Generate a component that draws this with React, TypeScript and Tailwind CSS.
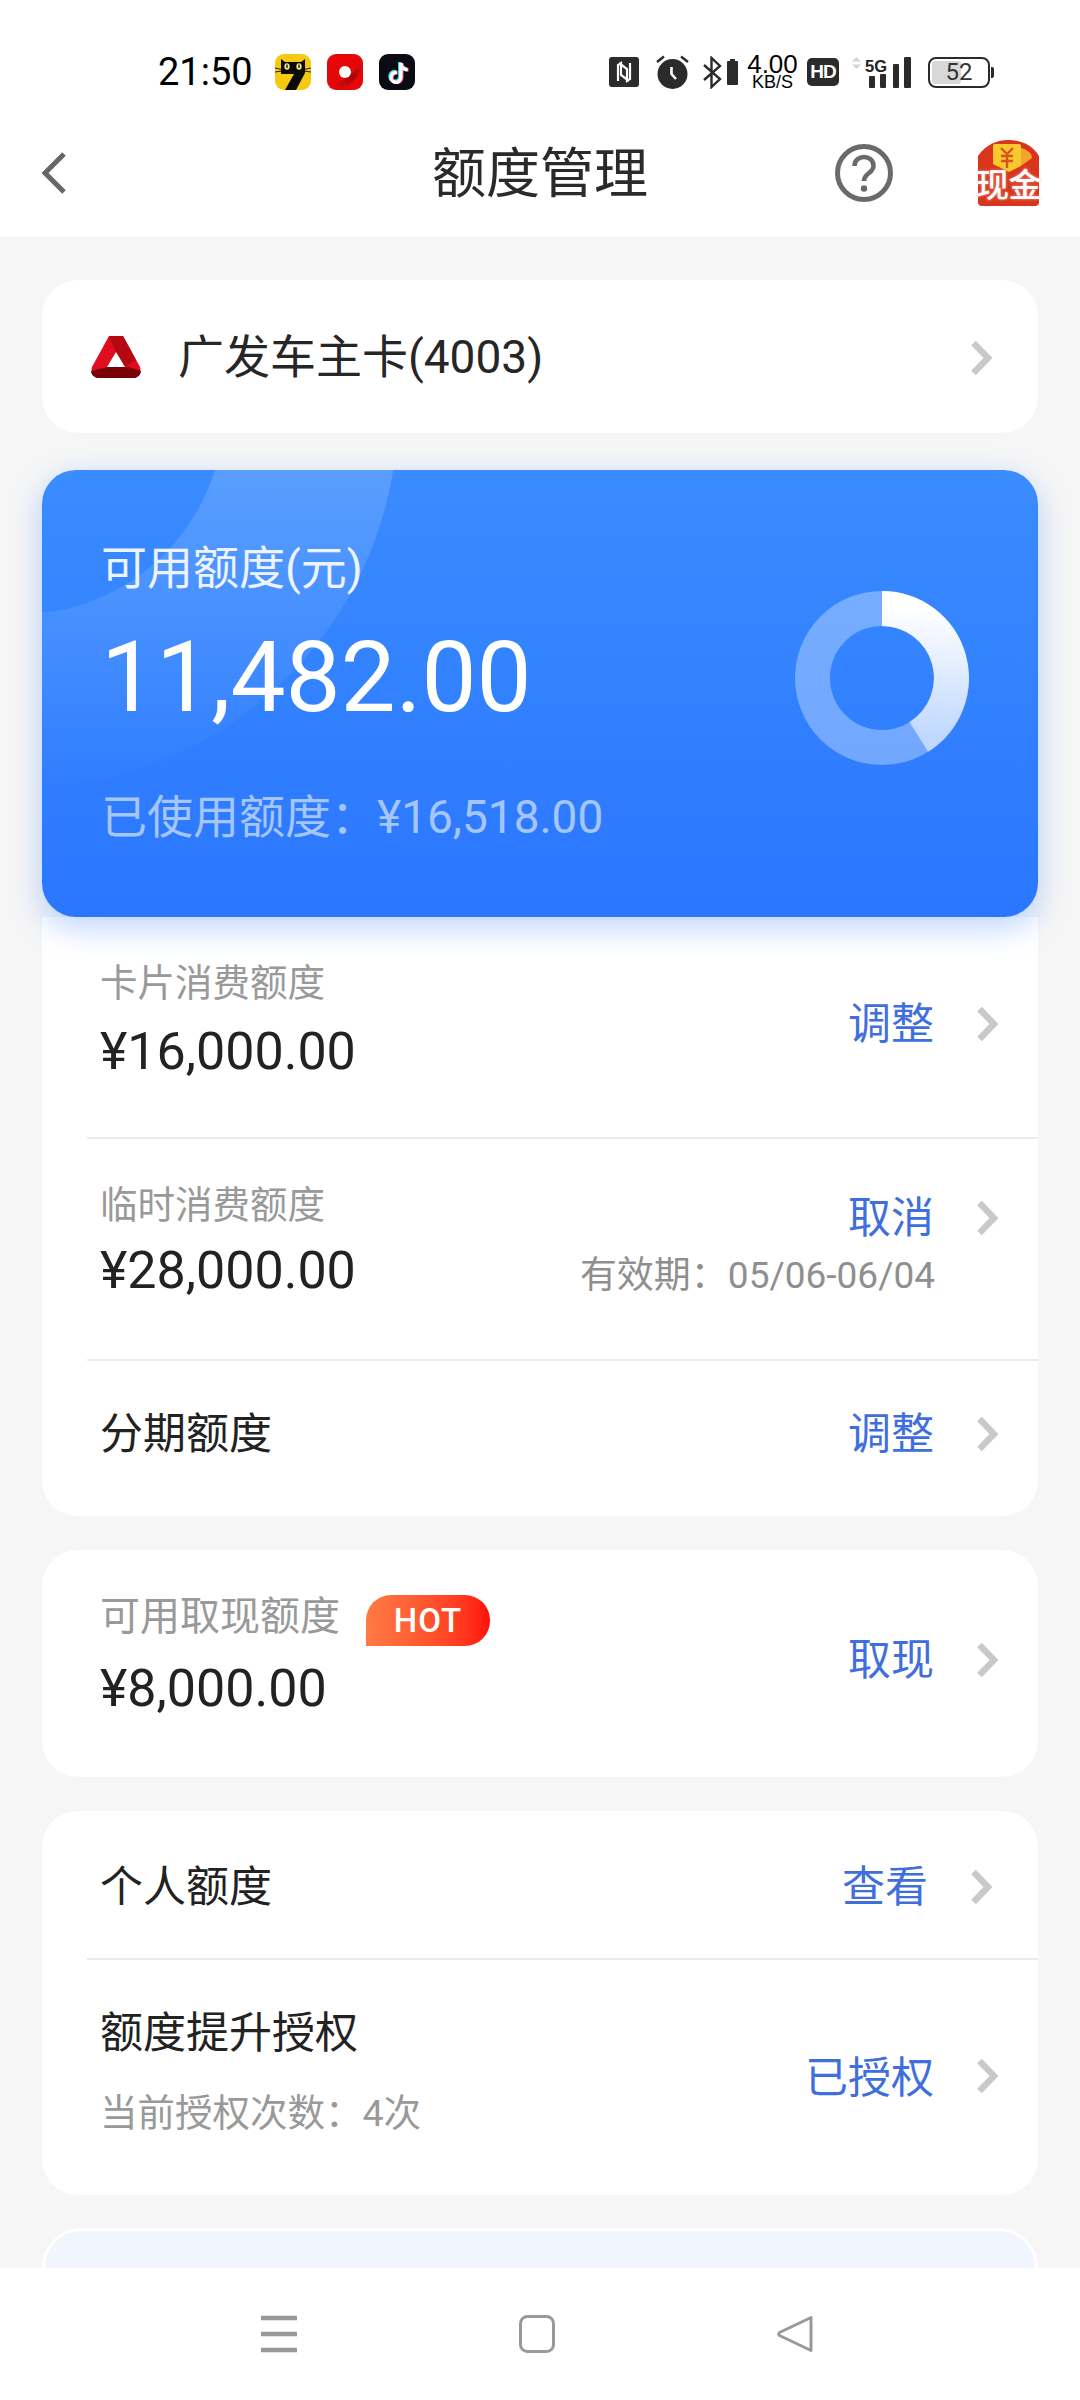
import { FaTiktok } from "react-icons/fa";

function Chevron({ className = "" }: { className?: string }) {
  return (
    <svg width="22" height="36" viewBox="0 0 22 36" className={className}>
      <path d="M3.5 3 L18 18 L3.5 33" fill="none" stroke="#c9c9c9" strokeWidth="6.5" />
    </svg>
  );
}

function CatIcon() {
  return (
    <svg width="36" height="36" viewBox="0 0 36 36">
      <rect width="36" height="36" rx="9" fill="#f5c90f" />
      <path d="M6 5 L10 8 H26 L30 5 V19 L21 36 H10 L19 20 H6 Z" fill="#0c0a05" />
      <ellipse cx="12" cy="12.5" rx="2.6" ry="3.2" fill="#f5e9a0" />
      <ellipse cx="24" cy="12.5" rx="2.6" ry="3.2" fill="#f5e9a0" />
      <path d="M12 10.5 V14 M24 10.5 V14" stroke="#0c0a05" strokeWidth="1.3" />
      <path d="M0 14 L7 15.5 M0 18 L7 17 M29 15.5 L36 14 M29 17 L36 18" stroke="#0c0a05" strokeWidth="0.9" />
    </svg>
  );
}

function RedIcon() {
  return (
    <svg width="36" height="36" viewBox="0 0 36 36">
      <defs>
        <linearGradient id="swirl" x1="0" y1="1" x2="1" y2="0">
          <stop offset="0" stopColor="#ee0a0a" />
          <stop offset="0.55" stopColor="#a80404" />
          <stop offset="1" stopColor="#e81010" />
        </linearGradient>
      </defs>
      <rect width="36" height="36" rx="9" fill="#e60808" />
      <path d="M4 30 C14 30 28 20 34 6 L36 12 C30 26 20 34 10 36 Z" fill="url(#swirl)" />
      <circle cx="18" cy="18" r="6" fill="#fff" />
    </svg>
  );
}

function TiktokIcon() {
  return (
    <div className="relative w-[36px] h-[36px] rounded-[9px] bg-[#0b0b16] overflow-hidden flex items-center justify-center">
      <FaTiktok className="absolute left-[8px] top-[8px] text-[#29e5e0]" size={21} />
      <FaTiktok className="absolute left-[10px] top-[9px] text-[#f0375a]" size={21} />
      <FaTiktok className="absolute left-[9px] top-[8.5px] text-white" size={21} />
    </div>
  );
}

function StatusRight() {
  return (
    <div className="flex items-center text-[#222]">
      <svg width="30" height="30" viewBox="0 0 30 30">
        <rect width="30" height="30" rx="3" fill="#2b2b2b" />
        <path d="M9 24 V8 L12 6 V18 L20 24 M21 6 V22 L18 24 V12 L10 6" fill="none" stroke="#fff" strokeWidth="2.2" />
      </svg>
      <svg width="33" height="34" viewBox="0 0 33 34" className="ml-[17px]">
        <circle cx="16.5" cy="19" r="15" fill="#2b2b2b" />
        <path d="M1 7 L8 1.5 M32 7 L25 1.5" stroke="#2b2b2b" strokeWidth="2.4" />
        <path d="M15.5 12 V19 L20 24" fill="none" stroke="#fff" strokeWidth="2.6" />
      </svg>
      <svg width="19" height="33" viewBox="0 0 19 33" className="ml-[14px]">
        <path d="M1 9 L17 23 L8.5 31 V2 L17 10 L1 24" fill="none" stroke="#2b2b2b" strokeWidth="2.4" />
      </svg>
      <div className="ml-[5px] w-[11px] h-[26px] flex flex-col items-center">
        <div className="w-[5px] h-[2px] bg-[#2b2b2b]" />
        <div className="w-[11px] h-[24px] bg-[#2b2b2b] rounded-[1px]" />
      </div>
      <div className="ml-[9px] w-[51px] flex flex-col items-center font-['Liberation_Sans',sans-serif] text-black">
        <span className="text-[26px] leading-[20px]">4.00</span>
        <span className="text-[18px] leading-[15px] mt-[1px]">KB/S</span>
      </div>
      <div className="ml-[9px] w-[32px] h-[28px] rounded-[5px] bg-[#2b2b2b] flex items-center justify-center text-white text-[19px] font-bold font-['Liberation_Sans',sans-serif] tracking-[-1px]">
        HD
      </div>
      <svg width="59" height="33" viewBox="0 0 59 33" className="ml-[13px]">
        <path d="M4.5 1 L9 5.5 H0 Z M4.5 13 L9 8.5 H0 Z" fill="#d4d4d4" />
        <text x="13" y="15.5" fontSize="17" fontWeight="700" fill="#222" fontFamily="Liberation Sans, sans-serif" textLength="22" lengthAdjust="spacingAndGlyphs">
          5G
        </text>
        <rect x="17" y="20" width="6" height="12" rx="1" fill="#2b2b2b" />
        <rect x="28" y="18" width="6" height="14" rx="1" fill="#2b2b2b" />
        <rect x="41" y="8" width="6" height="24" rx="1" fill="#2b2b2b" />
        <rect x="52" y="1" width="7" height="31" rx="1" fill="#2b2b2b" />
      </svg>
      <div className="ml-[17px] flex items-center">
        <div className="relative w-[62px] h-[31px] rounded-[8px] border-[2px] border-[#2b2b2b] overflow-hidden flex items-center justify-center">
          <div className="absolute left-[2px] top-[2px] bottom-[2px] w-[29px] bg-[#d8d8d8] rounded-[3px]" />
          <span className="relative text-[24px] leading-none text-[#333]">52</span>
        </div>
        <div className="ml-[1px] w-[3px] h-[11px] bg-[#2b2b2b] rounded-r-[2px]" />
      </div>
    </div>
  );
}

function CashIcon() {
  return (
    <div className="relative w-[65px] h-[66px]">
      <svg width="65" height="66" viewBox="0 0 65 66">
        <path d="M2 16 C10 4 22 0 32 0 C44 0 56 4 63 16 V62 Q63 66 59 66 H6 Q2 66 2 62 Z" fill="#d9341c" />
        <path d="M17 6 Q17 4 19 4 H43 Q45 4 45 6 V26 L33 32 L17 24 Z" fill="#f8c92f" />
        <path d="M45 8 C52 10 56 14 56 18 L45 26 Z" fill="#f2a52a" />
        <path d="M25 8 L31 14 L37 8 M31 14 V28 M25 16 H37 M25 21 H37" fill="none" stroke="#d9541c" strokeWidth="2.4" />
      </svg>
      <span className="absolute left-[-1px] top-[27px] w-[67px] text-center text-[33px] leading-[38px] font-medium text-white tracking-[-0.5px] [text-shadow:0_0_3px_#f3a08f]">
        现金
      </span>
    </div>
  );
}

function BankLogo() {
  return (
    <svg width="50" height="42" viewBox="0 0 50 42">
      <path d="M18 0 H32 L49 31 Q51 38 44 42 H6 Q-1 38 1 31 Z" fill="#e00d1e" />
      <path d="M18 0 H32 L45 24 L33 31 L25 16 Z" fill="#b50812" />
      <path d="M0 35 L16 31 H38 L50 35 Q50 40 44 42 H6 Q0 40 0 35 Z" fill="#7a0006" />
      <path d="M25 16 L34 31 H16 Z" fill="#fff" />
    </svg>
  );
}

function Donut() {
  return (
    <svg width="174" height="174" viewBox="0 0 174 174">
      <defs>
        <linearGradient id="arc" x1="0" y1="0" x2="0" y2="1">
          <stop offset="0" stopColor="#ffffff" />
          <stop offset="1" stopColor="#ffffff" stopOpacity="0.55" />
        </linearGradient>
      </defs>
      <circle cx="87" cy="87" r="69.5" fill="none" stroke="#ffffff" strokeOpacity="0.32" strokeWidth="35" />
      <path d="M87 17.5 A69.5 69.5 0 0 1 123.8 145.9" fill="none" stroke="url(#arc)" strokeWidth="35" />
    </svg>
  );
}

function Action({ text, chevronClass = "" }: { text: string; chevronClass?: string }) {
  return (
    <div className="flex items-center">
      <span className="text-[43px] leading-[60px] text-[#3f6fdc]">{text}</span>
      <Chevron className={`ml-[42px] ${chevronClass}`} />
    </div>
  );
}

function Divider() {
  return <div className="ml-[45px] h-[2px] bg-[#ebebeb]" />;
}

export default function App() {
  return (
    <div className="w-[1080px] h-[2400px] flex flex-col overflow-hidden bg-[#f6f6f6] font-['Roboto','Noto_Sans_CJK_SC',sans-serif] text-[#222]">
      <header className="bg-white h-[238px] shrink-0 border-b border-[#efefef]">
        <div className="h-[140px] pt-[4px] flex items-center justify-between pl-[158px] pr-[86px]">
          <div className="flex items-center">
            <span className="w-[93px] text-[38px] leading-none text-black">21:50</span>
            <div className="ml-[24px] flex items-center gap-[16px]">
              <CatIcon />
              <RedIcon />
              <TiktokIcon />
            </div>
          </div>
          <StatusRight />
        </div>
        <div className="h-[70px] grid grid-cols-[1fr_auto_1fr] items-center">
          <div className="pl-[42px] mb-[4px]">
            <svg width="24" height="42" viewBox="0 0 24 42" className="block">
              <path d="M22 2 L3 21 L22 40" fill="none" stroke="#666" strokeWidth="5" />
            </svg>
          </div>
          <h1 className="text-[54px] leading-[62px] font-normal text-[#2a2a2a]">额度管理</h1>
          <div className="flex items-center justify-end gap-[83px] pr-[39px] mb-[4px]">
            <svg width="58" height="58" viewBox="0 0 58 58">
              <circle cx="29" cy="29" r="26.5" fill="none" stroke="#6a6a6a" strokeWidth="5" />
              <path d="M19.5 22 C19.5 10 38.5 10 38.5 22 C38.5 29 29 29 29 37" fill="none" stroke="#6a6a6a" strokeWidth="4.6" />
              <circle cx="29" cy="44.5" r="3.2" fill="#6a6a6a" />
            </svg>
            <CashIcon />
          </div>
        </div>
      </header>

      <main className="flex-1 overflow-hidden px-[42px] pt-[42px]">
        <section className="h-[153px] bg-white rounded-[36px] flex items-center pl-[49px] pr-[46px]">
          <BankLogo />
          <span className="ml-[37px] text-[46px] leading-[60px] text-[#262626]">广发车主卡(4003)</span>
          <Chevron className="ml-auto mt-[3px]" />
        </section>

        <section className="relative z-10 mt-[37px] h-[447px] rounded-[34px] bg-gradient-to-b from-[#3a8cff] to-[#2b76ff] shadow-[0_10px_32px_rgba(43,118,255,0.32)] flex justify-between overflow-visible">
          <svg width="996" height="447" viewBox="0 0 996 447" className="absolute inset-0 rounded-[34px]">
            <defs>
              <linearGradient id="ring" gradientUnits="userSpaceOnUse" x1="0" y1="0" x2="0" y2="330">
                <stop offset="0" stopColor="#ffffff" stopOpacity="0.16" />
                <stop offset="1" stopColor="#ffffff" stopOpacity="0" />
              </linearGradient>
              <clipPath id="blueClip">
                <rect width="996" height="447" rx="34" />
              </clipPath>
            </defs>
            <circle clipPath="url(#blueClip)" cx="-22" cy="-60" r="291" fill="none" stroke="url(#ring)" strokeWidth="174" />
          </svg>
          <div className="relative pl-[59px] pt-[68px]">
            <div className="text-[46px] leading-[60px] text-[#eef4ff]">可用额度(元)</div>
            <div className="mt-[25px] text-[98px] leading-[110px] text-white">11,482.00</div>
            <div className="mt-[54px] text-[46px] leading-[60px] text-[#a5c6fb]">已使用额度：¥16,518.00</div>
          </div>
          <div className="relative pt-[121px] pr-[69px]">
            <Donut />
          </div>
        </section>

        <section className="bg-white rounded-b-[36px]">
          <div className="h-[220px] flex items-start justify-between pl-[58px] pr-[40px]">
            <div className="pt-[40px]">
              <div className="text-[37.5px] leading-[52px] text-[#999]">卡片消费额度</div>
              <div className="mt-[13px] text-[52px] leading-[60px]">¥16,000.00</div>
            </div>
            <div className="pt-[77px]">
              <Action text="调整" />
            </div>
          </div>
          <Divider />
          <div className="h-[220px] flex items-start justify-between pl-[58px] pr-[40px]">
            <div className="pt-[40px]">
              <div className="text-[37.5px] leading-[52px] text-[#999]">临时消费额度</div>
              <div className="mt-[10px] text-[52px] leading-[60px]">¥28,000.00</div>
            </div>
            <div className="pt-[49px] flex flex-col items-end">
              <Action text="取消" />
              <span className="mt-[3px] mr-[63px] text-[37px] leading-[50px] text-[#8f8f8f] whitespace-nowrap">有效期：05/06-06/04</span>
            </div>
          </div>
          <Divider />
          <div className="h-[155px] flex items-center justify-between pl-[58px] pr-[40px] pb-[10px]">
            <span className="text-[43px] leading-[60px]">分期额度</span>
            <Action text="调整" />
          </div>
        </section>

        <section className="mt-[34px] h-[227px] bg-white rounded-[36px] flex items-start justify-between pl-[58px] pr-[40px]">
          <div className="pt-[41px]">
            <div className="flex items-start">
              <span className="text-[40px] leading-[52px] text-[#999]">可用取现额度</span>
              <span className="ml-[26px] mt-[4px] w-[124px] h-[51px] rounded-t-[25px] rounded-br-[25px] bg-gradient-to-r from-[#ff7a45] to-[#ff0a0a] flex items-center justify-center text-[33px] font-medium tracking-[1px] text-white">
                HOT
              </span>
            </div>
            <div className="mt-[13px] text-[52px] leading-[60px]">¥8,000.00</div>
          </div>
          <div className="pt-[80px]">
            <Action text="取现" />
          </div>
        </section>

        <section className="mt-[34px] h-[384px] bg-white rounded-[36px]">
          <div className="h-[147px] flex items-center justify-between pl-[58px] pr-[46px] pt-[5px]">
            <span className="text-[43px] leading-[60px]">个人额度</span>
            <Action text="查看" />
          </div>
          <Divider />
          <div className="h-[235px] flex items-center justify-between pl-[58px] pr-[40px]">
            <div className="mb-[10px]">
              <div className="text-[43px] leading-[60px]">额度提升授权</div>
              <div className="mt-[20px] text-[37.5px] leading-[60px] text-[#999]">当前授权次数：4次</div>
            </div>
            <Action text="已授权" chevronClass="-mt-[4px]" />
          </div>
        </section>

        <section className="mt-[33px] h-[120px] rounded-t-[40px] border-[3px] border-white bg-[#f0f5fe]" />
      </main>

      <nav className="h-[132px] shrink-0 bg-white flex items-center justify-center gap-[222px] pr-[6px]">
        <svg width="36" height="38" viewBox="0 0 36 38">
          <path d="M0 3 H36 M0 19 H36 M0 35 H36" stroke="#999" strokeWidth="4.5" />
        </svg>
        <svg width="36" height="38" viewBox="0 0 36 38">
          <rect x="1.5" y="1.5" width="33" height="35" rx="7" fill="none" stroke="#999" strokeWidth="3" />
        </svg>
        <svg width="36" height="38" viewBox="0 0 36 38">
          <path d="M34 2.5 V35.5 L2.5 20.5 Q1 19 2.5 17.5 Z" fill="none" stroke="#999" strokeWidth="3" strokeLinejoin="round" />
        </svg>
      </nav>
    </div>
  );
}
